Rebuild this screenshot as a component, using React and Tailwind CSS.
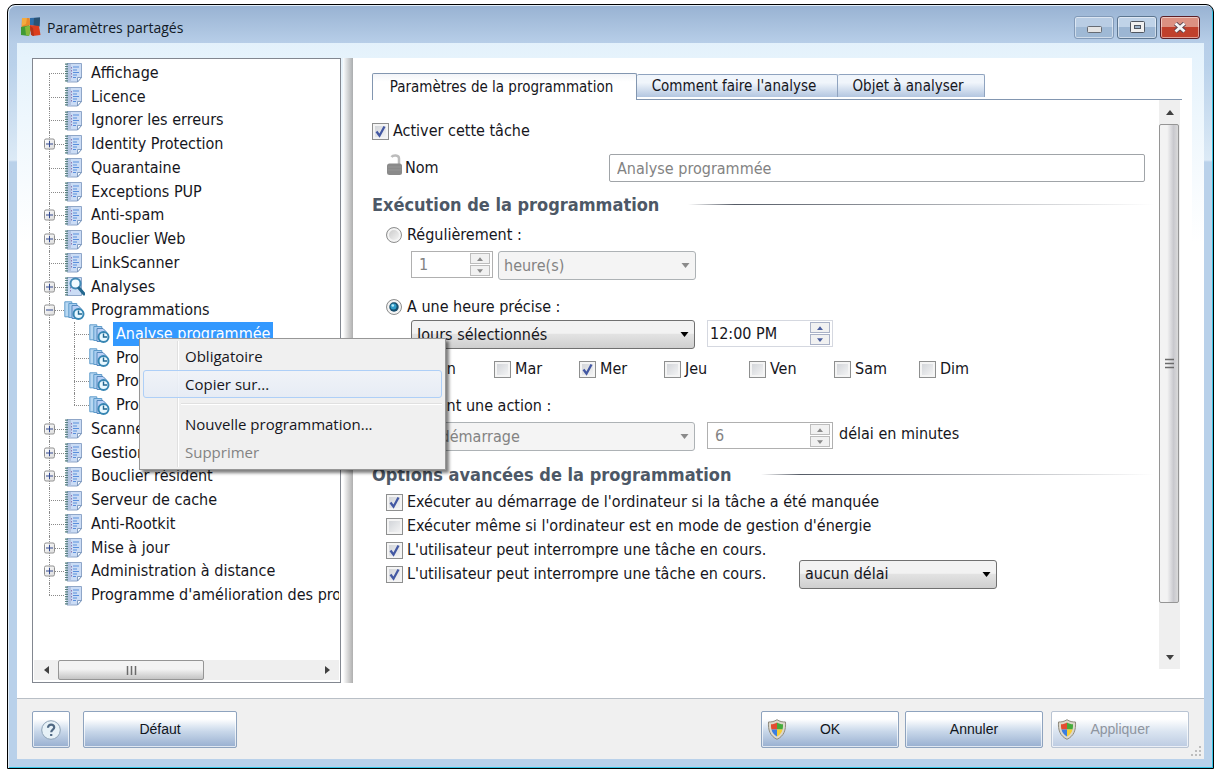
import React, { useId } from "react";
import clsx from "clsx";

const uiFont = "font-['DejaVu_Sans_Condensed','DejaVu_Sans',sans-serif]";
const menuFont = "font-['Open_Sans','Noto_Sans',sans-serif]";
const buttonFont = "font-['Liberation_Sans',Arial,sans-serif]";

const tree = [
  { label: "Affichage" },
  { label: "Licence" },
  { label: "Ignorer les erreurs" },
  { label: "Identity Protection", toggle: "+" },
  { label: "Quarantaine" },
  { label: "Exceptions PUP" },
  { label: "Anti-spam", toggle: "+" },
  { label: "Bouclier Web", toggle: "+" },
  { label: "LinkScanner" },
  { label: "Analyses", toggle: "+", icon: "search" },
  { label: "Programmations", toggle: "-", icon: "schedule" },
  { label: "Analyse programmée", child: true, selected: true, icon: "schedule" },
  { label: "Programmation", child: true, icon: "schedule" },
  { label: "Programmation", child: true, icon: "schedule" },
  { label: "Programmation", child: true, lastChild: true, icon: "schedule" },
  { label: "Scanner e-mail", toggle: "+" },
  { label: "Gestionnaire", toggle: "+" },
  { label: "Bouclier résident", toggle: "+" },
  { label: "Serveur de cache" },
  { label: "Anti-Rootkit" },
  { label: "Mise à jour", toggle: "+" },
  { label: "Administration à distance", toggle: "+" },
  { label: "Programme d'amélioration des pro", last: true },
];

function AppLogo() {
  return (
    <svg viewBox="0 0 20 20" className="size-5" aria-hidden="true">
      <path d="M1 1h7.500l1 6-2 3-7 1z" fill="#e9892b" />
      <path d="M1 1h5l-1 6-4 2z" fill="#f3ab3e" />
      <path d="M9 1l10-.500-.500 9L9 8z" fill="#2f6da8" />
      <path d="M13 1l6-.500-.500 9-6-1z" fill="#2a5272" />
      <path d="M0 10l8-1.500 2 2.500-2 8-8-1z" fill="#3f9a35" />
      <path d="M4 10l4-1.500 2 2.500-2 8-3-1z" fill="#86b83a" />
      <path d="M9 8l9 1 1.500 9-8 1L9 12z" fill="#dd3d1c" />
      <path d="M9 9l3 2 1 8-3-1z" fill="#b3341a" />
    </svg>
  );
}

function BookIcon() {
  return (
    <svg viewBox="0 0 20 21" className="h-[21px] w-5" aria-hidden="true">
      <path d="M3 1.500h14.500v14l-4 4.500H3z" fill="#cbdcf5" stroke="#8fa6c8" />
      <path d="M3 2h4v18H3z" fill="#b3c4e2" />
      <path d="M17.500 15.500l-4 4.500v-4.500z" fill="#f4f9ff" stroke="#6d8bb5" strokeWidth=".8" />
      <path d="M2.500 1.500v18.500" stroke="#56807e" strokeWidth="3" strokeDasharray="1.200 1.200" />
      <path d="M7.500 5v12" stroke="#8f79b5" strokeDasharray="1.500 1.500" />
      <path d="M9 5h6M9 8h4M9 10.500h6M9 13h4M9 15.500h3" stroke="#5b8fdc" strokeWidth="1.100" />
    </svg>
  );
}

function SearchBookIcon() {
  return (
    <svg viewBox="0 0 21 21" className="size-[21px]" aria-hidden="true">
      <path d="M3 1.500h14.500v18H3z" fill="#cbdcf5" stroke="#8fa6c8" />
      <path d="M2.500 1.500v18.500" stroke="#56807e" strokeWidth="3" strokeDasharray="1.200 1.200" />
      <path d="M6.500 5v12" stroke="#8f79b5" strokeDasharray="1.500 1.500" />
      <circle cx="11.500" cy="7.500" r="5" fill="#f1faff" stroke="#4289b5" strokeWidth="2" />
      <path d="M15 12l5 6" stroke="#24688f" strokeWidth="3" strokeLinecap="round" />
    </svg>
  );
}

function ScheduleIcon() {
  return (
    <svg viewBox="0 0 21 21" className="size-[21px]" aria-hidden="true">
      <path d="M.8 1.800h7v15h-7z" fill="#b8d8f2" stroke="#5f9ccb" />
      <path d="M4.800 3.500h8v14h-8z" fill="#a9cdf0" stroke="#5f9ccb" />
      <path d="M8 5.500h6l3 3v10H8z" fill="#b8cff5" stroke="#5588bd" />
      <circle cx="14.500" cy="14" r="5" fill="#e9f8ff" stroke="#3786b3" strokeWidth="2" />
      <path d="M14.500 10.500V14H18" fill="none" stroke="#21668f" strokeWidth="1.400" />
    </svg>
  );
}

function ShieldIcon() {
  return (
    <svg viewBox="0 0 20 21" className="h-[21px] w-5" aria-hidden="true">
      <path d="M10 .7c2.600 1.800 5.500 2.400 8.500 2.300.5 8-1.500 14-8.500 17.300C3 17 1 11 1.500 3 4.500 3.100 7.400 2.500 10 .7z" fill="#ddd8cb" stroke="#8d897c" />
      <path d="M10 3.500C8.300 4.700 6 5.200 4 5.300c0 2 0 3.500.5 5.200H10z" fill="#e44b30" />
      <path d="M10 3.500c1.700 1.200 4 1.700 6 1.800 0 2 0 3.500-.5 5.200H10z" fill="#45ab3c" />
      <path d="M4.500 10.500H10v7c-3-1.500-4.800-4-5.500-7z" fill="#3c7ee0" />
      <path d="M15.500 10.500H10v7c3-1.500 4.800-4 5.500-7z" fill="#f6ce35" />
    </svg>
  );
}

function LockIcon() {
  return (
    <svg viewBox="0 0 15 21" className="h-[21px] w-[15px]" aria-hidden="true">
      <path d="M4.500 3C6 .8 12 .5 12 4.500V11" fill="none" stroke="#bcbcbc" strokeWidth="2.500" />
      <rect x="0" y="9.500" width="15" height="11.500" rx="2.500" fill="#8a8a8a" />
      <path d="M1 13h13M1 16h13" stroke="#969696" />
    </svg>
  );
}

function Arrow({ dir, className }) {
  const d = {
    up: "M0 5L4 0l4 5z",
    down: "M0 0h8L4 5z",
    left: "M5 0v8L0 4z",
    right: "M0 0v8l5-4z",
  }[dir];
  const side = dir === "left" || dir === "right";
  return (
    <svg viewBox={side ? "0 0 5 8" : "0 0 8 5"} className={className} fill="currentColor" aria-hidden="true">
      <path d={d} />
    </svg>
  );
}

function TreeRow({ item }) {
  return (
    <li className="flex min-h-0 items-center whitespace-nowrap">
      <span className={clsx("relative shrink-0 self-stretch", item.child ? "w-[55px]" : "w-[30px]")}>
        <span
          className={clsx(
            "absolute left-[15px] border-l border-dotted border-[#8a8a8a]",
            item.label === "Affichage" ? "top-1/2" : "top-0",
            item.last ? "bottom-1/2" : "bottom-0"
          )}
        />
        {!item.child && <span className="absolute top-1/2 right-0 left-[15px] border-t border-dotted border-[#8a8a8a]" />}
        {item.child && (
          <>
            <span className={clsx("absolute top-0 left-10 border-l border-dotted border-[#8a8a8a]", item.lastChild ? "bottom-1/2" : "bottom-0")} />
            <span className="absolute top-1/2 right-0 left-10 border-t border-dotted border-[#8a8a8a]" />
          </>
        )}
        {item.toggle && (
          <button
            type="button"
            aria-label={`${item.toggle === "+" ? "Développer" : "Réduire"} ${item.label}`}
            className="absolute top-1/2 left-[10px] grid size-[11px] -translate-y-1/2 place-items-center rounded-xs border border-[#8f8f8f] bg-linear-to-br from-white to-[#dcdcdc]"
          >
            <svg viewBox="0 0 7 7" className="size-[7px]" aria-hidden="true">
              <path d={item.toggle === "+" ? "M0 3.500h7M3.500 0v7" : "M0 3.500h7"} stroke="#32498f" />
            </svg>
          </button>
        )}
      </span>
      <span className="flex w-[22px] shrink-0">
        {item.icon === "search" ? <SearchBookIcon /> : item.icon === "schedule" ? <ScheduleIcon /> : <BookIcon />}
      </span>
      <span className={clsx("ml-[2px] flex items-center self-stretch px-[3px]", item.selected && "bg-[#3399ff] text-white")}>
        {item.label}
      </span>
    </li>
  );
}

function Check({ label, checked, className }) {
  return (
    <label className={clsx("flex items-center gap-1 whitespace-nowrap", className)}>
      <span className="grid size-[17px] shrink-0">
        <input
          type="checkbox"
          defaultChecked={checked}
          className="peer col-start-1 row-start-1 size-[17px] appearance-none border border-[#8e8f8f] bg-linear-to-br from-[#cdd0d5] to-[#f8f8f8] shadow-[inset_0_0_0_2px_#f4f4f4]"
        />
        <svg viewBox="0 0 17 17" className="pointer-events-none invisible col-start-1 row-start-1 size-[17px] peer-checked:visible" aria-hidden="true">
          <path d="M4.500 8.500l3 4.200L12.500 3.500" fill="none" stroke="#4358a3" strokeWidth="2.300" />
        </svg>
      </span>
      {label}
    </label>
  );
}

function Radio({ label, checked, className }) {
  return (
    <label className={clsx("ml-[14px] flex h-6 items-center gap-[5px] whitespace-nowrap", className)}>
      <span className="grid size-4 shrink-0">
        <input
          type="radio"
          name="execution"
          defaultChecked={checked}
          className="peer col-start-1 row-start-1 size-4 appearance-none rounded-full border border-[#8e8f8f] bg-linear-to-br from-[#c4c4c4] to-[#fbfbfb] shadow-[inset_0_0_0_2px_#f4f4f4]"
        />
        <svg viewBox="0 0 16 16" className="pointer-events-none invisible col-start-1 row-start-1 size-4 peer-checked:visible" aria-hidden="true">
          <circle cx="8" cy="8" r="4.700" fill="#17506f" />
          <circle cx="7.500" cy="7.500" r="3" fill="#2f9cc9" />
          <circle cx="6.800" cy="6.500" r="1.300" fill="#b9ecfa" />
        </svg>
      </span>
      {label}
    </label>
  );
}

function Dropdown({ label, value, disabled, className }) {
  return (
    <span className={clsx("grid items-center", className)}>
      <select
        aria-label={label}
        disabled={disabled}
        className={clsx(
          "col-start-1 row-start-1 h-[29px] w-full appearance-none rounded-[3px] border pr-6 pl-[5px]",
          disabled
            ? "border-[#adb2b5] bg-[#f4f4f4] text-[#838383] opacity-100"
            : "border-[#707070] bg-linear-to-b from-[#f2f2f2] from-45% via-[#e2e2e2] via-50% to-[#cfcfcf]"
        )}
      >
        <option>{value}</option>
      </select>
      <Arrow dir="down" className={clsx("pointer-events-none col-start-1 row-start-1 mr-[6px] h-[5px] w-[9px] justify-self-end", disabled ? "text-[#8a8a8a]" : "text-black")} />
    </span>
  );
}

function Spinner({ label, value, disabled, className, inputClass }) {
  const btn = clsx(
    "grid w-5 flex-1 place-items-center border bg-[#f1f1f1]",
    disabled ? "border-[#bcbcbc] text-[#8a8a8a]" : "border-[#a9b1c6] text-[#4c5f9e]"
  );
  return (
    <span className={clsx("flex h-[27px] border bg-white p-px pr-[2px]", disabled ? "border-[#b0b0b0]" : "border-[#d5d8e0]", className)}>
      <input aria-label={label} defaultValue={value} disabled={disabled} className={clsx("w-0 min-w-0 flex-1 bg-transparent", disabled && "text-[#838383]", inputClass)} />
      <span className="flex flex-col gap-px">
        <button type="button" aria-label={`${label} : augmenter`} disabled={disabled} className={btn}>
          <Arrow dir="up" className="h-1 w-[6px]" />
        </button>
        <button type="button" aria-label={`${label} : diminuer`} disabled={disabled} className={btn}>
          <Arrow dir="down" className="h-1 w-[6px]" />
        </button>
      </span>
    </span>
  );
}

function Heading({ children, className }) {
  return (
    <div className={clsx("mr-[5px] flex h-6 items-center gap-[29px]", className)}>
      <h2 className="text-[18px] font-bold whitespace-nowrap text-[#4d5866]">{children}</h2>
      <span className="h-px flex-1 bg-linear-to-r from-transparent via-[#555b66] via-10% to-transparent" />
    </div>
  );
}

function TreePanel() {
  return (
    <nav aria-label="Paramètres" className="flex w-[309px] shrink-0 flex-col overflow-hidden border border-[#828790] bg-white px-px">
      <ul className="mt-[2px] grid h-[546px] shrink-0 auto-rows-fr overflow-hidden">
        {tree.map((item, i) => (
          <TreeRow key={i} item={item} />
        ))}
      </ul>
      <div className="mt-auto mb-[2px] flex h-5 items-center bg-[#efefef]">
        <button type="button" aria-label="Défiler à gauche" className="grid h-full w-6 place-items-center text-[#404040]">
          <Arrow dir="left" className="h-2 w-[5px]" />
        </button>
        <span className="grid h-full w-[146px] place-items-center rounded-xs border border-[#959595] bg-linear-to-b from-[#f3f3f3] from-45% to-[#c4c4c4]">
          <svg viewBox="0 0 11 9" className="h-[9px] w-[11px]" aria-hidden="true">
            <path d="M1.500 0v9M5.500 0v9M9.500 0v9" stroke="#6b6b6b" strokeWidth="1.500" />
          </svg>
        </span>
        <button type="button" aria-label="Défiler à droite" className="ml-auto grid h-full w-6 place-items-center text-[#404040]">
          <Arrow dir="right" className="h-2 w-[5px]" />
        </button>
      </div>
    </nav>
  );
}

function Tabs() {
  const idle = "mb-[2px] h-[23px] self-end rounded-t-xs border border-b-0 border-[#8fa3bf] bg-linear-to-b from-[#f0f5fb] from-35% to-[#b3c6e0] pr-[6px] whitespace-nowrap";
  return (
    <div role="tablist" className="flex h-[27px] text-[15px]">
      <button type="button" role="tab" aria-selected="true" className="w-[265px] rounded-t-xs border border-b-0 border-[#8296b0] bg-linear-to-b from-[#f2f4f8] to-white to-30% pr-[6px] whitespace-nowrap">
        Paramètres de la programmation
      </button>
      <div className="flex flex-1 border-b border-[#8296b0]">
        <button type="button" role="tab" aria-selected="false" className={clsx(idle, "w-[201px] border-l-0")}>
          Comment faire l'analyse
        </button>
        <button type="button" role="tab" aria-selected="false" className={clsx(idle, "w-[147px] border-l-0")}>
          Objet à analyser
        </button>
      </div>
    </div>
  );
}

function ScheduleForm() {
  const nameId = useId();
  return (
    <form className="min-w-0 flex-1 pt-5">
      <Check label="Activer cette tâche" checked className="h-[22px]" />
      <div className="mt-3 mr-[14px] flex h-7 items-center">
        <span className="ml-[15px] self-start">
          <LockIcon />
        </span>
        <label htmlFor={nameId} className="ml-[3px] w-[204px]">
          Nom
        </label>
        <input id={nameId} defaultValue="Analyse programmée" disabled className="h-7 min-w-0 flex-1 rounded-xs border border-[#a0a4a8] bg-white px-[7px] text-[#838383]" />
      </div>
      <Heading className="mt-[10px]">Exécution de la programmation</Heading>
      <Radio label="Régulièrement :" className="mt-[7px]" />
      <div className="mt-1 ml-[39px] flex h-[29px] items-start gap-[5px]">
        <Spinner label="Fréquence" value="1" disabled className="w-[82px]" inputClass="pl-[6px]" />
        <Dropdown label="Unité" value="heure(s)" disabled className="w-[198px]" />
      </div>
      <Radio label="A une heure précise :" checked className="mt-[15px]" />
      <div className="mt-px ml-[39px] flex h-[29px] items-start gap-3">
        <Dropdown label="Périodicité" value="Jours sélectionnés" className="w-[284px]" />
        <Spinner label="Heure" value="12:00 PM" className="w-[126px]" inputClass="pl-px" />
      </div>
      <div className="mt-2 ml-[37px] grid h-[22px] grid-cols-[repeat(7,85px)]">
        {["Lun", "Mar", "Mer", "Jeu", "Ven", "Sam", "Dim"].map((day) => (
          <Check key={day} label={day} checked={day === "Mer"} />
        ))}
      </div>
      <Radio label="Suivant une action :" className="mt-[15px]" />
      <div className="mt-1 ml-[39px] flex h-[29px] items-start gap-3">
        <Dropdown label="Action" value="Au démarrage" disabled className="w-[284px]" />
        <span className="flex gap-[6px]">
          <Spinner label="Délai" value="6" disabled className="w-[126px]" inputClass="pl-[6px]" />
          <span className="leading-6">délai en minutes</span>
        </span>
      </div>
      <Heading className="mt-[11px]">Options avancées de la programmation</Heading>
      <div className="mt-1 ml-[14px] flex flex-col">
        <Check label="Exécuter au démarrage de l'ordinateur si la tâche a été manquée" checked className="h-6" />
        <Check label="Exécuter même si l'ordinateur est en mode de gestion d'énergie" className="h-6" />
        <Check label="L'utilisateur peut interrompre une tâche en cours." checked className="h-6" />
        <div className="flex h-6 items-center">
          <Check label="L'utilisateur peut interrompre une tâche en cours." checked className="w-[413px]" />
          <Dropdown label="Délai d'interruption" value="aucun délai" className="w-[198px]" />
        </div>
      </div>
    </form>
  );
}

function VerticalScrollbar() {
  return (
    <div className="flex w-[21px] flex-col bg-[#efefef]">
      <button type="button" aria-label="Défiler vers le haut" className="grid h-6 place-items-center text-[#404040]">
        <Arrow dir="up" className="h-[5px] w-2" />
      </button>
      <span className="mr-px grid grow-[22] place-items-center rounded-xs border border-[#959595] bg-linear-to-r from-[#f3f3f3] from-40% via-[#c9c9ce] via-75% to-[#dadada]">
        <svg viewBox="0 0 9 11" className="h-[11px] w-[9px]" aria-hidden="true">
          <path d="M0 1.500h9M0 5.500h9M0 9.500h9" stroke="#6b6b6b" strokeWidth="1.500" />
        </svg>
      </span>
      <span className="grow-[2]" />
      <button type="button" aria-label="Défiler vers le bas" className="grid h-6 place-items-center text-[#404040]">
        <Arrow dir="down" className="h-[5px] w-2" />
      </button>
    </div>
  );
}

function FooterButton({ children, icon, disabled, className }) {
  return (
    <button
      type="button"
      disabled={disabled}
      className={clsx(
        "grid h-[37px] grid-cols-1 items-center rounded-xs border bg-linear-to-b shadow-[inset_0_0_0_1px_#ffffffb0]",
        disabled
          ? "border-[#b9c4d3] from-white from-20% via-[#dbe5f1] via-55% to-[#bccbe2] text-[#8e959f]"
          : "border-[#8ea3be] from-white from-20% via-[#c9d8ea] via-55% to-[#98afd0] text-[#10151c]",
        className
      )}
    >
      {icon && <span className="col-start-1 row-start-1 ml-[5px]">{icon}</span>}
      <span className="col-start-1 row-start-1 justify-self-center">{children}</span>
    </button>
  );
}

function Footer() {
  return (
    <footer className={clsx("relative flex h-[61px] shrink-0 items-start border-t border-[#b9bfc6] bg-[#f0f0f0] px-[15px] pt-3 text-[14px]", buttonFont)}>
      <FooterButton className="w-[38px]">
        <svg viewBox="0 0 20 20" role="img" aria-label="Aide" className="size-5">
          <circle cx="10" cy="10" r="9.300" fill="#e7f1f7" stroke="#8da2b6" />
          <path d="M7 7.700c0-4.200 6.400-3.900 6.200-.2-.1 2.200-3 2-3 4.700M10.200 14v2" fill="none" stroke="#4f6883" strokeWidth="2.200" />
        </svg>
      </FooterButton>
      <FooterButton className="ml-[13px] w-[154px]">Défaut</FooterButton>
      <FooterButton icon={<ShieldIcon />} className="ml-auto w-[138px]">OK</FooterButton>
      <FooterButton className="ml-[6px] w-[138px]">Annuler</FooterButton>
      <FooterButton icon={<ShieldIcon />} disabled className="ml-2 w-[138px]">Appliquer</FooterButton>
      <svg viewBox="0 0 12 12" className="absolute right-[2px] bottom-[2px] size-3" fill="#bdbdbd" aria-hidden="true">
        <path d="M9 1h2v2H9zM5 5h2v2H5zM9 5h2v2H9zM1 9h2v2H1zM5 9h2v2H5zM9 9h2v2H9z" />
      </svg>
    </footer>
  );
}

function ContextMenu() {
  const item = "relative flex h-7 w-full items-center border pl-[41px] text-left";
  return (
    <div role="menu" className={clsx("absolute top-[333px] left-[131px] w-[307px] border border-[#979797] bg-[#f0f0f0] p-[3px] text-[15px] text-[#16161c] shadow-[3px_3px_3px_#00000080]", menuFont)}>
      <div className="absolute inset-y-[2px] left-[37px] w-[2px] border-l border-[#e0e0e0] bg-white" />
      <button type="button" role="menuitem" className={clsx(item, "border-transparent")}>Obligatoire</button>
      <button type="button" role="menuitem" className={clsx(item, "rounded-[3px] border-[#aecff7] bg-linear-to-b from-[#f0f3f9]/80 to-[#e4ebf6]/80")}>Copier sur...</button>
      <div role="separator" className="my-[5px] ml-[38px] h-[2px] border-t border-[#e0e0e0] bg-white" />
      <button type="button" role="menuitem" className={clsx(item, "border-transparent")}>Nouvelle programmation...</button>
      <button type="button" role="menuitem" disabled className={clsx(item, "border-transparent text-[#838383]")}>Supprimer</button>
    </div>
  );
}

function TitleBar() {
  const btn = "grid h-[23px] w-10 place-items-center rounded-[3px] border shadow-[inset_0_0_0_1px_#ffffff80]";
  return (
    <header className={clsx("flex h-[38px] shrink-0 items-center pt-[8px] pb-[2px] text-[14px] text-[#111a26]", menuFont)}>
      <span className="ml-1">
        <AppLogo />
      </span>
      <h1 className="ml-[6px] flex-1">Paramètres partagés</h1>
      <div className="mr-1 flex gap-[3px]">
        <button type="button" aria-label="Réduire" className={clsx(btn, "border-[#839bb9] bg-linear-to-b from-[#b9cde4] from-50% to-[#9fb9d5] to-50%")}>
          <svg viewBox="0 0 15 7" className="mt-1 h-[7px] w-[15px]" aria-hidden="true">
            <rect x=".5" y=".5" width="14" height="6" rx="1" fill="#e4e4e4" stroke="#666b73" />
          </svg>
        </button>
        <button type="button" aria-label="Agrandir" className={clsx(btn, "border-[#5d7690] bg-linear-to-b from-[#c0d3e8] from-50% to-[#9cb6d3] to-50%")}>
          <svg viewBox="0 0 15 12" className="h-3 w-[15px]" aria-hidden="true">
            <rect x=".5" y=".5" width="14" height="11" rx="1" fill="#f0f0f0" stroke="#4f5661" />
            <rect x="4.500" y="4.500" width="6" height="3" fill="#9db3ca" stroke="#4f5661" />
          </svg>
        </button>
        <button type="button" aria-label="Fermer" className={clsx(btn, "border-[#5c2028] bg-linear-to-b from-[#dc9182] from-50% to-[#c0402c] to-50%")}>
          <svg viewBox="0 0 14 11" className="h-[11px] w-[14px]" aria-hidden="true">
            <path d="M2.500 1.500l9 8M11.500 1.500l-9 8" stroke="#5b4550" strokeWidth="4.500" />
            <path d="M2.500 1.500l9 8M11.500 1.500l-9 8" stroke="#f5f5f5" strokeWidth="2.800" />
          </svg>
        </button>
      </div>
    </header>
  );
}

export default function App() {
  return (
    <div className="flex h-screen min-h-[760px] bg-white pt-1 pr-px pb-[2px] pl-[7px]">
      <div className="relative flex min-w-0 flex-1 flex-col rounded-t-lg border border-black bg-[linear-gradient(#98b2d2,#b7cee8_38px,#b9d1ea_60px,#dceaf6_155px,#b9d1ea_157px)] px-[9px] pb-[9px] shadow-[inset_1px_1px_0_#e3eef8,inset_-1px_-1px_0_#35c5e5]">
        <TitleBar />
        <div className={clsx("flex min-h-0 flex-1 bg-[linear-gradient(#e3f1fb,#e6f3fc_15px,#ffffff_200px)] py-[15px] pr-3 pl-[15px] text-[16px] text-[#16161c]", uiFont)}>
          <TreePanel />
          <div className="ml-[2px] w-[10px] shrink-0 bg-linear-to-r from-white to-[#9b9b9b] opacity-80" />
          <main className="flex min-w-0 flex-1 flex-col bg-white pt-[15px] pr-[10px] pb-[14px] pl-[19px]">
            <Tabs />
            <div className="flex min-h-0 flex-1 pr-[2px]">
              <ScheduleForm />
              <VerticalScrollbar />
            </div>
          </main>
        </div>
        <Footer />
        <ContextMenu />
      </div>
    </div>
  );
}
